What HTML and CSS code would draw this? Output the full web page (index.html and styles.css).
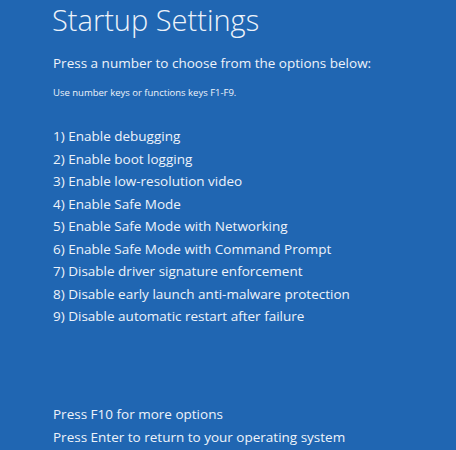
FILE: index.html
```html
<!DOCTYPE html>
<html>
<head>
<meta charset="utf-8">
<link rel="stylesheet" href="styles.css">
</head>
<body>
<main class="screen">
  <h1 class="title">Startup Settings</h1>
  <p class="lead">Press a number to choose from the options below:</p>
  <p class="hint">Use number keys or functions keys F1-F9.</p>
  <ol class="options">
    <li>1) Enable debugging</li>
    <li>2) Enable boot logging</li>
    <li>3) Enable low-resolution video</li>
    <li>4) Enable Safe Mode</li>
    <li>5) Enable Safe Mode with Networking</li>
    <li>6) Enable Safe Mode with Command Prompt</li>
    <li>7) Disable driver signature enforcement</li>
    <li>8) Disable early launch anti-malware protection</li>
    <li>9) Disable automatic restart after failure</li>
  </ol>
  <div class="footer">
    <p>Press F10 for more options</p>
    <p>Press Enter to return to your operating system</p>
  </div>
</main>
</body>
</html>
```
FILE: styles.css
```css
html, body {
  margin: 0;
  padding: 0;
  background: #2066b2;
}
.screen {
  width: 456px;
  height: 450px;
  box-sizing: border-box;
  padding: 0 0 0 53px;
  font-family: "Open Sans", "Noto Sans", sans-serif;
  color: #eef3fa;
  display: flex;
  flex-direction: column;
  overflow: hidden;
}
.title {
  margin: 2px 0 0 -1px;
  font-size: 29px;
  font-weight: 300;
  line-height: 36px;
}
.lead {
  margin: 15px 0 0;
  font-size: 13.5px;
  line-height: 20px;
}
.hint {
  margin: 14px 0 0;
  font-size: 9.5px;
  line-height: 12px;
}
.options {
  list-style: none;
  margin: 26px 0 0;
  padding: 0;
  font-size: 13.5px;
  line-height: 22.5px;
}
.footer {
  margin-top: auto;
  margin-bottom: 2px;
  font-size: 13.5px;
  line-height: 22.5px;
}
.footer p {
  margin: 0;
}
```
